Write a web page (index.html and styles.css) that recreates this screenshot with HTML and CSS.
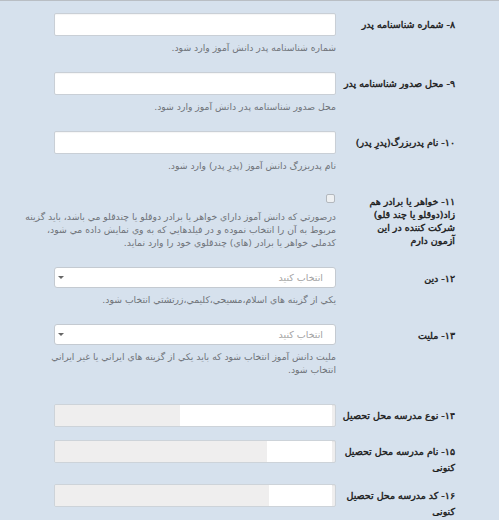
FILE: index.html
```html
<!DOCTYPE html>
<html lang="fa" dir="rtl">
<head>
<meta charset="utf-8">
<title>فرم</title>
<link rel="stylesheet" href="styles.css">
</head>
<body>
<div class="page">
  <div class="form">
    <div class="row">
      <div class="label">۸- شماره شناسنامه پدر</div>
      <div class="field">
        <div class="input"></div>
        <div class="help">شماره شناسنامه پدر دانش آموز وارد شود.</div>
      </div>
    </div>
    <div class="row">
      <div class="label">۹- محل صدور شناسنامه پدر</div>
      <div class="field">
        <div class="input"></div>
        <div class="help">محل صدور شناسنامه پدر دانش آموز وارد شود.</div>
      </div>
    </div>
    <div class="row">
      <div class="label">۱۰- نام پدربزرگ(پدرِ پدر)</div>
      <div class="field">
        <div class="input"></div>
        <div class="help">نام پدربزرگ دانش آموز (پدرِ پدر) وارد شود.</div>
      </div>
    </div>
    <div class="row">
      <div class="label label-check">۱۱- خواهر یا برادر هم زاد(دوقلو یا چند قلو) شرکت کننده در این آزمون دارم</div>
      <div class="field field-check">
        <span class="checkbox"></span>
        <div class="help help-check">درصورتي که دانش آموز داراي خواهر يا برادر دوقلو يا چندقلو مي باشد، بايد گزينه<br>مربوط به آن را انتخاب نموده و در فيلدهايي که به وي نمايش داده مي شود،<br>کدملي خواهر يا برادر (هاي) چندقلوي خود را وارد نمايد.</div>
      </div>
    </div>
    <div class="row">
      <div class="label label-select">۱۲- دین</div>
      <div class="field">
        <div class="select"><span class="placeholder">انتخاب کنید</span><span class="arrow"></span></div>
        <div class="help">يکي از گزينه هاي اسلام،مسيحي،کليمي،زرتشتي انتخاب شود.</div>
      </div>
    </div>
    <div class="row row-last-help">
      <div class="label label-select">۱۳- ملیت</div>
      <div class="field">
        <div class="select"><span class="placeholder">انتخاب کنید</span><span class="arrow"></span></div>
        <div class="help">مليت دانش آموز انتخاب شود که بايد يکي از گزينه هاي ايراني يا غير ايراني<br>انتخاب شود.</div>
      </div>
    </div>
    <div class="row row-short">
      <div class="label">۱۴- نوع مدرسه محل تحصیل</div>
      <div class="field">
        <div class="input input-skeleton"><span class="sk-white" style="width: 152px"></span><span class="sk-gray"></span></div>
      </div>
    </div>
    <div class="row row-mid">
      <div class="label">۱۵- نام مدرسه محل تحصیل<br>کنونی</div>
      <div class="field">
        <div class="input input-skeleton"><span class="sk-white" style="width: 65px"></span><span class="sk-gray"></span></div>
      </div>
    </div>
    <div class="row">
      <div class="label">۱۶- کد مدرسه محل تحصیل<br>کنونی</div>
      <div class="field">
        <div class="input input-skeleton"><span class="sk-white" style="width: 63px"></span><span class="sk-gray"></span></div>
      </div>
    </div>
  </div>
</div>
</body>
</html>
```
FILE: styles.css
```css
html, body {
  margin: 0;
  padding: 0;
}
body {
  background: #d6e1ed;
  font-family: "DejaVu Sans", sans-serif;
  color: #222;
}
.page {
  border-top: 1px solid #b9bec4;
  height: 519px;
  overflow: hidden;
}
.form {
  padding: 12px 44px 0 54px;
  display: flex;
  flex-direction: column;
}
.row {
  display: flex;
  align-items: flex-start;
  gap: 19px;
  margin-bottom: 18px;
}
.label {
  flex: none;
  width: 100px;
  font-size: 9.5px;
  font-weight: normal;
  -webkit-text-stroke: 0.4px #1a1a1a;
  line-height: 16px;
  padding-top: 4px;
  color: #1a1a1a;
  white-space: nowrap;
}
.label-check {
  white-space: normal;
  width: 104px;
  margin-left: -4px;
  line-height: 13px;
  padding-top: 5px;
}
.label-select {
  padding-top: 4px;
}
.field {
  flex: none;
  width: 282px;
  display: flex;
  flex-direction: column;
}
.input {
  height: 21px;
  background: #fff;
  border: 1px solid #c9cfd6;
  border-radius: 2px;
  box-shadow: inset 0 1px 1px rgba(0, 0, 0, 0.04);
}
.input-skeleton {
  display: flex;
  background: #efeeee;
  border-color: #cdd3d9;
  overflow: hidden;
}
.sk-white {
  flex: none;
  margin-right: 3px;
  background: #fff;
}
.sk-gray {
  flex: 1;
  background: #efeeee;
}
.help {
  margin-top: 5px;
  font-size: 9.25px;
  line-height: 13px;
  color: #6f7379;
  white-space: nowrap;
}
.field-check {
  padding-top: 4px;
}
.checkbox {
  display: block;
  width: 7px;
  height: 7px;
  margin-right: 1px;
  border: 1px solid #b3b8be;
  border-radius: 2px;
  background: #eef0f2;
}
.help-check {
  margin-top: 7px;
}
.select {
  height: 19px;
  background: #fff;
  border: 1px solid #c4cad1;
  border-radius: 3px;
  display: flex;
  align-items: center;
  justify-content: space-between;
  padding: 0 12px 0 3px;
}
.placeholder {
  font-size: 9.5px;
  color: #a2a2a2;
}
.arrow {
  width: 0;
  height: 0;
  border-left: 3px solid transparent;
  border-right: 3px solid transparent;
  border-top: 3px solid #666;
}
.row-last-help {
  margin-bottom: 28px;
}
.row-short {
  margin-bottom: 13px;
}
.row-mid {
  margin-bottom: 8px;
}
```
